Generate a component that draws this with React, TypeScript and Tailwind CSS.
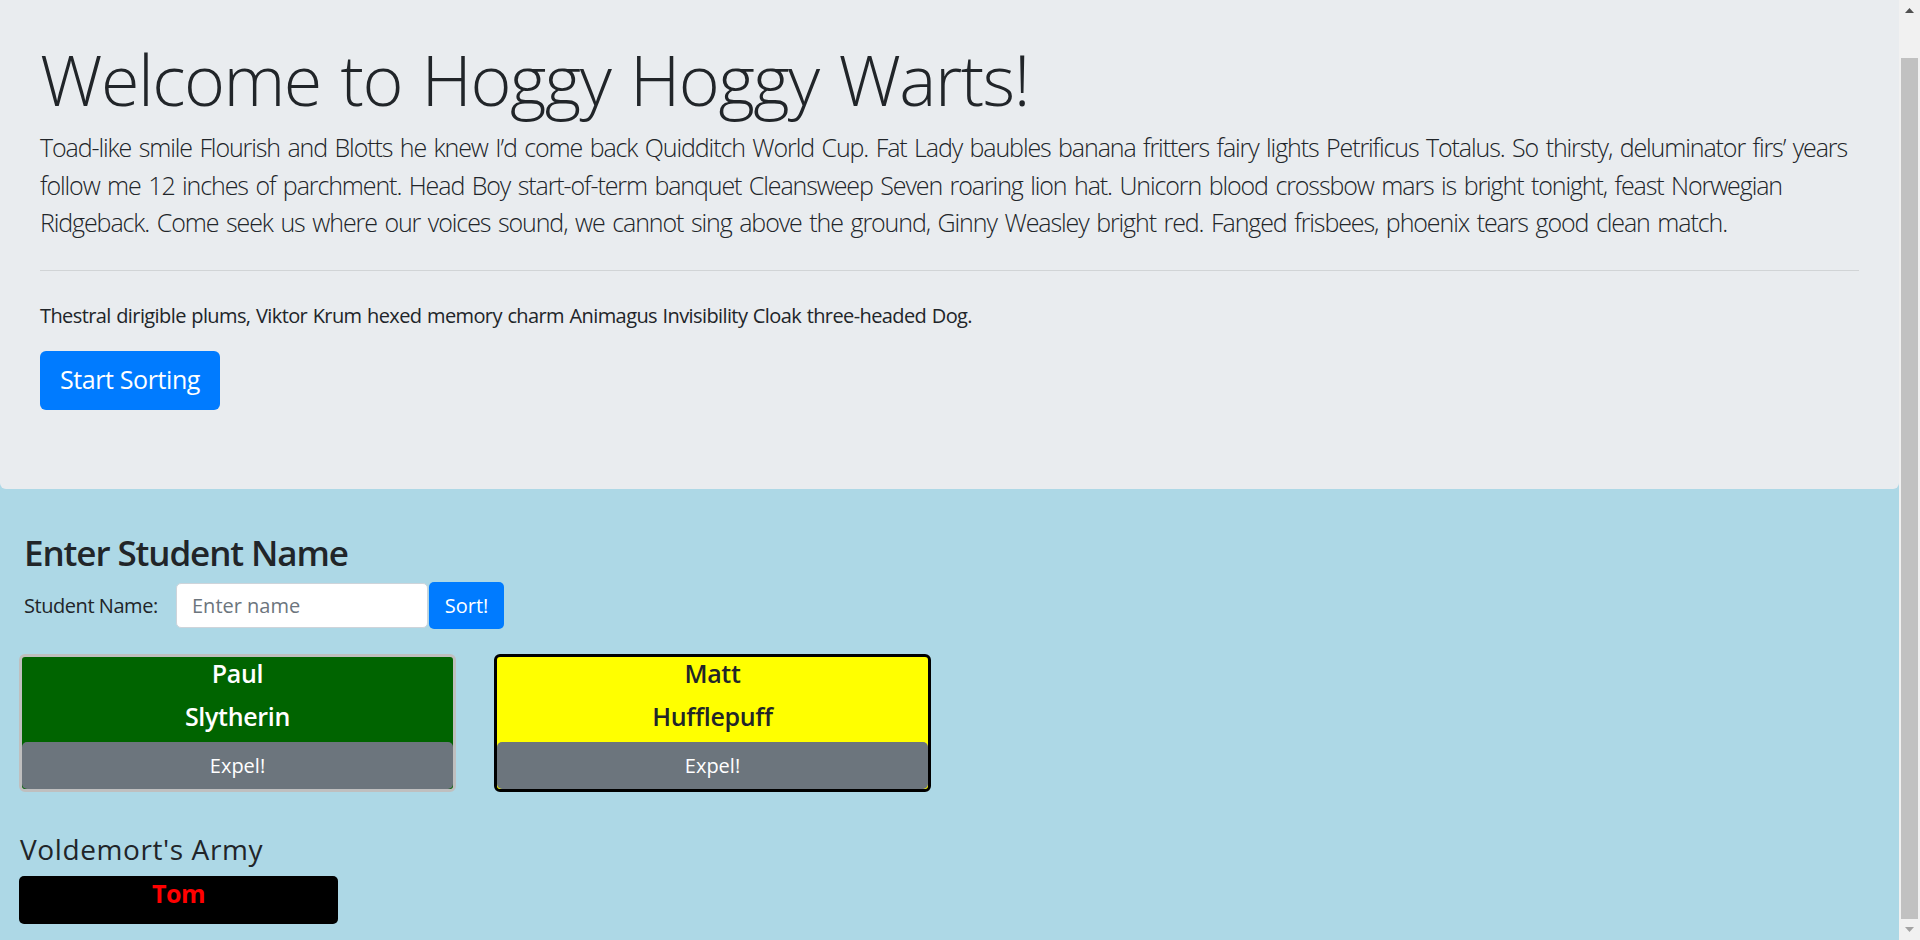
import React from "react";

function ScrollBar() {
  return (
    <div className="flex h-[940px] w-[21px] shrink-0 flex-col bg-[#f1f1f1]">
      <div className="flex h-[21px] items-center justify-center">
        <svg width="9" height="5" viewBox="0 0 9 5">
          <polygon points="4.5,0 9,5 0,5" fill="#505050" />
        </svg>
      </div>
      <div className="flex flex-1 flex-col pt-[37px]">
        <div className="mx-[2px] flex-1 bg-[#c1c1c1]" />
      </div>
      <div className="flex h-[21px] items-center justify-center">
        <svg width="9" height="5" viewBox="0 0 9 5">
          <polygon points="0,0 9,0 4.5,5" fill="#a3a3a3" />
        </svg>
      </div>
    </div>
  );
}

function StudentCard({
  name,
  house,
  bg,
  border,
  text,
}: {
  name: string;
  house: string;
  bg: string;
  border: string;
  text: string;
}) {
  return (
    <div
      className={`flex h-[138px] w-[437px] flex-col overflow-hidden rounded-[6px] border-[3px] text-center ${bg} ${border} ${text}`}
    >
      <div className="pt-[1px] text-[25px] font-semibold leading-[30px] tracking-[-0.3px]">{name}</div>
      <div className="mt-[13px] text-[25px] font-semibold leading-[30px] tracking-[-0.3px]">{house}</div>
      <button className="mt-[11px] h-[47px] w-full rounded-[5px] bg-[#6c757d] text-[20px] leading-[30px] text-white">
        Expel!
      </button>
    </div>
  );
}

export default function App() {
  return (
    <div className="flex h-[940px] w-[1920px] overflow-hidden font-['Open_Sans',sans-serif] text-[#212529]">
      <div className="flex w-[1899px] flex-col bg-[#add8e6]">
        <div className="h-[489px] shrink-0 rounded-b-[6px] bg-[#e9ecef] px-[40px] pt-[37px]">
          <h1 className="w-[989px] text-[70px] font-light leading-[84px] tracking-[-1.5px] [text-align-last:justify]">
            Welcome to Hoggy Hoggy Warts!
          </h1>
          <div className="mt-[8px] text-[25px] font-light leading-[37.5px]">
            <p className="w-[1807px] tracking-[-1.1px] [text-align-last:justify]">
              Toad-like smile Flourish and Blotts he knew I’d come back Quidditch World Cup. Fat Lady baubles banana fritters fairy lights Petrificus Totalus. So thirsty, deluminator firs’ years
            </p>
            <p className="w-[1742px] tracking-[-1.1px] [text-align-last:justify]">
              follow me 12 inches of parchment. Head Boy start-of-term banquet Cleansweep Seven roaring lion hat. Unicorn blood crossbow mars is bright tonight, feast Norwegian
            </p>
            <p className="w-[1687px] tracking-[-1.1px] [text-align-last:justify]">
              Ridgeback. Come seek us where our voices sound, we cannot sing above the ground, Ginny Weasley bright red. Fanged frisbees, phoenix tears good clean match.
            </p>
          </div>
          <hr className="mt-[28px] border-t border-[rgba(0,0,0,0.1)]" />
          <p className="mt-[30px] w-[932px] text-[20px] leading-[30px] tracking-[-0.6px] [text-align-last:justify]">
            Thestral dirigible plums, Viktor Krum hexed memory charm Animagus Invisibility Cloak three-headed Dog.
          </p>
          <button className="mt-[20px] h-[59px] w-[180px] rounded-[6px] bg-[#007bff] text-[25px] leading-[37.5px] tracking-[-0.4px] text-white">
            Start Sorting
          </button>
        </div>

        <div className="flex flex-col px-[19px] pt-[43px]">
          <h3 className="ml-[5px] text-[35px] font-semibold leading-[42px] tracking-[-1.1px]">Enter Student Name</h3>
          <div className="ml-[5px] mt-[8px] flex h-[47px] items-center">
            <label className="w-[152px] text-[20px] leading-[30px] tracking-[-0.45px]">Student Name:</label>
            <input
              className="h-[45px] w-[252px] rounded-[5px] border border-[#ced4da] bg-white px-[15px] text-[20px] leading-[30px] text-[#495057] outline-none placeholder:text-[#6c757d]"
              placeholder="Enter name"
            />
            <button className="ml-[1px] h-[47px] w-[75px] rounded-[5px] bg-[#007bff] text-[20px] leading-[30px] text-white">
              Sort!
            </button>
          </div>

          <div className="mt-[25px] flex gap-[38px]">
            <StudentCard
              name="Paul"
              house="Slytherin"
              bg="bg-[#006400]"
              border="border-[#bfbfbf]"
              text="text-white"
            />
            <StudentCard
              name="Matt"
              house="Hufflepuff"
              bg="bg-[#ffff00]"
              border="border-black"
              text="text-[#212529]"
            />
          </div>

          <h4 className="ml-[1px] mt-[40px] text-[28px] font-medium leading-[34px] tracking-[0.6px]">Voldemort's Army</h4>
          <div className="mt-[10px] h-[48px] w-[319px] rounded-[5px] bg-black pt-[2px] text-center text-[25px] font-bold leading-[30px] tracking-[-0.5px] text-[#ff0000]">
            Tom
          </div>
        </div>
      </div>
      <ScrollBar />
    </div>
  );
}
